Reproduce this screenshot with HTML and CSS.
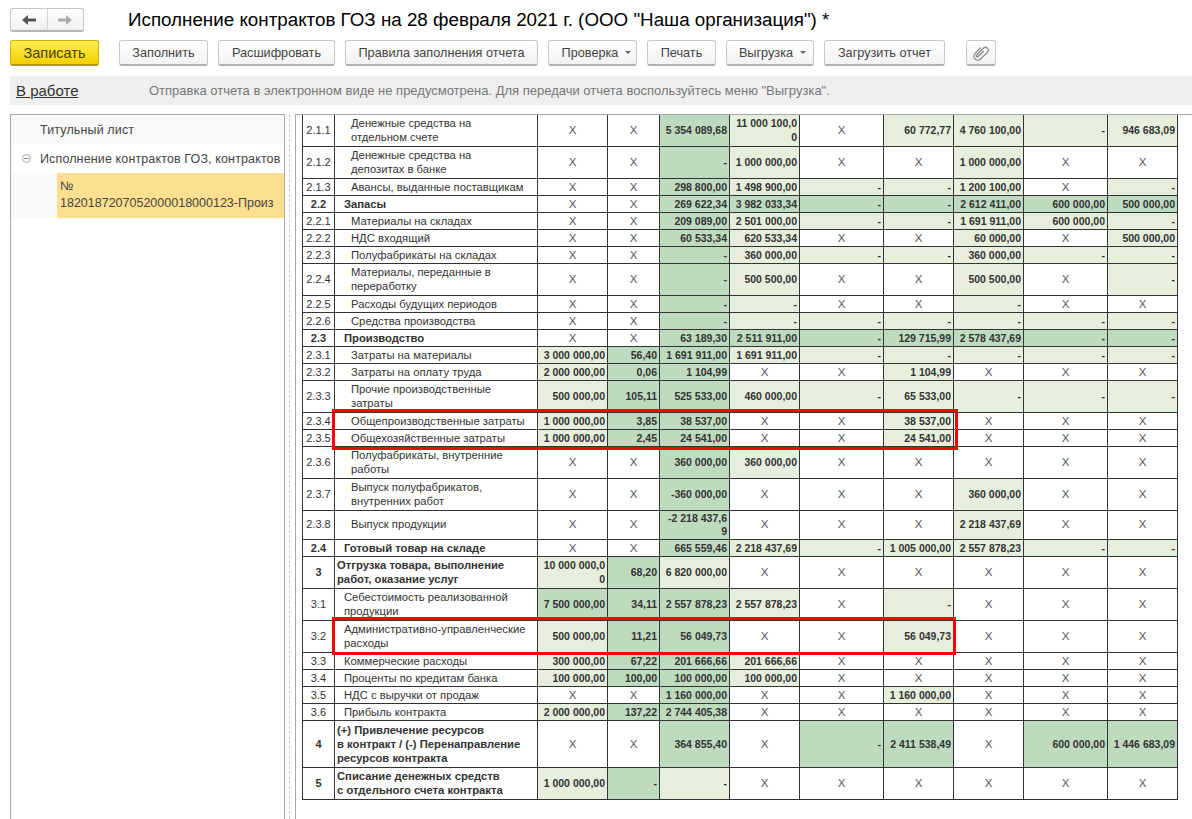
FILE: index.html
```html
<!DOCTYPE html>
<html lang="ru">
<head>
    <meta charset="UTF-8">
    <title>Исполнение контрактов ГОЗ</title>
    <link rel="stylesheet" href="styles.css">
</head>
<body>
    <div class="title-bar">
        <div class="nav-box">
            <button class="nav-btn"><svg width="16" height="12" viewBox="0 0 16 12"><path d="M1 6l6-5v3.500h8v3H7V11z" fill="#555"/></svg></button>
            <button class="nav-btn"><svg width="16" height="12" viewBox="0 0 16 12"><path d="M15 6L9 1v3.500H1v3h8V11z" fill="#aaa"/></svg></button>
        </div>
        <h1 class="doc-title">Исполнение контрактов ГОЗ на 28 февраля 2021 г. (ООО "Наша организация") *</h1>
    </div>

    <div class="toolbar">
        <button class="btn btn-save">Записать</button>
        <button class="btn btn-first w-fill">Заполнить</button>
        <button class="btn w-decode">Расшифровать</button>
        <button class="btn w-rules">Правила заполнения отчета</button>
        <button class="btn w-check">Проверка<span class="caret"></span></button>
        <button class="btn w-print">Печать</button>
        <button class="btn w-export">Выгрузка<span class="caret"></span></button>
        <button class="btn w-load">Загрузить отчет</button>
        <button class="btn btn-clip"><svg width="18" height="18" viewBox="0 0 16 16"><path transform="rotate(45 8 8)" d="M4.500 5v7a3.500 3.500 0 0 0 7 0V3.500a2.500 2.500 0 0 0-5 0V12a1 1 0 0 0 2 0V5" fill="none" stroke="#8c8c8c" stroke-width="1.200"/></svg></button>
    </div>

    <div class="status-bar">
        <a class="status-link">В работе</a>
        <span class="status-note">Отправка отчета в электронном виде не предусмотрена. Для передачи отчета воспользуйтесь меню "Выгрузка".</span>
    </div>

    <div class="workspace">
        <div class="side-panel">
            <div class="tree-row tree-gray">Титульный лист</div>
            <div class="tree-row"><span class="collapse-icon"></span>Исполнение контрактов ГОЗ, контрактов</div>
            <div class="tree-leaf"><div class="tree-selected">№<br>1820187207052000018000123-Произ</div></div>
        </div>
        <div class="splitter"></div>
        <div class="report">
            <div class="table-wrap">
                <table class="grid">
                    <colgroup>
                        <col class="c-code"><col class="c-name"><col class="c-70"><col class="c-52"><col class="c-70"><col class="c-70"><col class="c-84"><col class="c-70"><col class="c-70"><col class="c-84"><col class="c-70">
                    </colgroup>
                    <tr class="first"><td>2.1.1</td><td class="n3">Денежные средства на<br>отдельном счете</td><td class="x">X</td><td class="x">X</td><td class="d">5 354 089,68</td><td class="l">11 000 100,0<br>0</td><td class="x">X</td><td class="l">60 772,77</td><td class="l">4 760 100,00</td><td class="l">-</td><td class="l">946 683,09</td></tr>
                    <tr class="two"><td>2.1.2</td><td class="n3">Денежные средства на<br>депозитах в банке</td><td class="x">X</td><td class="x">X</td><td class="d">-</td><td class="l">1 000 000,00</td><td class="x">X</td><td class="x">X</td><td class="l">1 000 000,00</td><td class="x">X</td><td class="x">X</td></tr>
                    <tr><td>2.1.3</td><td class="n3">Авансы, выданные поставщикам</td><td class="x">X</td><td class="x">X</td><td class="d">298 800,00</td><td class="l">1 498 900,00</td><td class="l">-</td><td class="l">-</td><td class="l">1 200 100,00</td><td class="x">X</td><td class="l">-</td></tr>
                    <tr class="sum"><td>2.2</td><td class="n2">Запасы</td><td class="x">X</td><td class="x">X</td><td class="d">269 622,34</td><td class="d">3 982 033,34</td><td class="d">-</td><td class="d">-</td><td class="d">2 612 411,00</td><td class="d">600 000,00</td><td class="d">500 000,00</td></tr>
                    <tr><td>2.2.1</td><td class="n3">Материалы на складах</td><td class="x">X</td><td class="x">X</td><td class="d">209 089,00</td><td class="l">2 501 000,00</td><td class="l">-</td><td class="l">-</td><td class="l">1 691 911,00</td><td class="l">600 000,00</td><td class="l">-</td></tr>
                    <tr><td>2.2.2</td><td class="n3">НДС входящий</td><td class="x">X</td><td class="x">X</td><td class="d">60 533,34</td><td class="l">620 533,34</td><td class="x">X</td><td class="x">X</td><td class="l">60 000,00</td><td class="x">X</td><td class="l">500 000,00</td></tr>
                    <tr><td>2.2.3</td><td class="n3">Полуфабрикаты на складах</td><td class="x">X</td><td class="x">X</td><td class="d">-</td><td class="l">360 000,00</td><td class="l">-</td><td class="l">-</td><td class="l">360 000,00</td><td class="l">-</td><td class="l">-</td></tr>
                    <tr class="two"><td>2.2.4</td><td class="n3">Материалы, переданные в<br>переработку</td><td class="x">X</td><td class="x">X</td><td class="d">-</td><td class="l">500 500,00</td><td class="x">X</td><td class="x">X</td><td class="l">500 500,00</td><td class="x">X</td><td class="l">-</td></tr>
                    <tr><td>2.2.5</td><td class="n3">Расходы будущих периодов</td><td class="x">X</td><td class="x">X</td><td class="d">-</td><td class="l">-</td><td class="x">X</td><td class="x">X</td><td class="l">-</td><td class="x">X</td><td class="x">X</td></tr>
                    <tr><td>2.2.6</td><td class="n3">Средства производства</td><td class="x">X</td><td class="x">X</td><td class="d">-</td><td class="l">-</td><td class="l">-</td><td class="l">-</td><td class="l">-</td><td class="l">-</td><td class="l">-</td></tr>
                    <tr class="sum"><td>2.3</td><td class="n2">Производство</td><td class="x">X</td><td class="x">X</td><td class="d">63 189,30</td><td class="d">2 511 911,00</td><td class="d">-</td><td class="d">129 715,99</td><td class="d">2 578 437,69</td><td class="d">-</td><td class="d">-</td></tr>
                    <tr><td>2.3.1</td><td class="n3">Затраты на материалы</td><td class="l">3 000 000,00</td><td class="d">56,40</td><td class="d">1 691 911,00</td><td class="l">1 691 911,00</td><td class="l">-</td><td class="l">-</td><td class="l">-</td><td class="l">-</td><td class="l">-</td></tr>
                    <tr><td>2.3.2</td><td class="n3">Затраты на оплату труда</td><td class="l">2 000 000,00</td><td class="d">0,06</td><td class="d">1 104,99</td><td class="x">X</td><td class="x">X</td><td class="l">1 104,99</td><td class="x">X</td><td class="x">X</td><td class="x">X</td></tr>
                    <tr class="two"><td>2.3.3</td><td class="n3">Прочие производственные<br>затраты</td><td class="l">500 000,00</td><td class="d">105,11</td><td class="d">525 533,00</td><td class="l">460 000,00</td><td class="l">-</td><td class="l">65 533,00</td><td class="l">-</td><td class="l">-</td><td class="l">-</td></tr>
                    <tr><td>2.3.4</td><td class="n3">Общепроизводственные затраты</td><td class="l">1 000 000,00</td><td class="d">3,85</td><td class="d">38 537,00</td><td class="x">X</td><td class="x">X</td><td class="l">38 537,00</td><td class="x">X</td><td class="x">X</td><td class="x">X</td></tr>
                    <tr><td>2.3.5</td><td class="n3">Общехозяйственные затраты</td><td class="l">1 000 000,00</td><td class="d">2,45</td><td class="d">24 541,00</td><td class="x">X</td><td class="x">X</td><td class="l">24 541,00</td><td class="x">X</td><td class="x">X</td><td class="x">X</td></tr>
                    <tr class="two"><td>2.3.6</td><td class="n3">Полуфабрикаты, внутренние<br>работы</td><td class="x">X</td><td class="x">X</td><td class="d">360 000,00</td><td class="l">360 000,00</td><td class="x">X</td><td class="x">X</td><td class="x">X</td><td class="x">X</td><td class="x">X</td></tr>
                    <tr class="two"><td>2.3.7</td><td class="n3">Выпуск полуфабрикатов,<br>внутренних работ</td><td class="x">X</td><td class="x">X</td><td class="d">-360 000,00</td><td class="x">X</td><td class="x">X</td><td class="x">X</td><td class="l">360 000,00</td><td class="x">X</td><td class="x">X</td></tr>
                    <tr class="tight"><td>2.3.8</td><td class="n3">Выпуск продукции</td><td class="x">X</td><td class="x">X</td><td class="d">-2 218 437,6<br>9</td><td class="x">X</td><td class="x">X</td><td class="x">X</td><td class="l">2 218 437,69</td><td class="x">X</td><td class="x">X</td></tr>
                    <tr class="sum"><td>2.4</td><td class="n2">Готовый товар на складе</td><td class="x">X</td><td class="x">X</td><td class="d">665 559,46</td><td class="l">2 218 437,69</td><td class="l">-</td><td class="l">1 005 000,00</td><td class="l">2 557 878,23</td><td class="l">-</td><td class="l">-</td></tr>
                    <tr class="sum two"><td>3</td><td class="n1">Отгрузка товара, выполнение<br>работ, оказание услуг</td><td class="l">10 000 000,0<br>0</td><td class="d">68,20</td><td class="l">6 820 000,00</td><td class="x">X</td><td class="x">X</td><td class="x">X</td><td class="x">X</td><td class="x">X</td><td class="x">X</td></tr>
                    <tr class="two"><td>3.1</td><td class="n2">Себестоимость реализованной<br>продукции</td><td class="d">7 500 000,00</td><td class="d">34,11</td><td class="d">2 557 878,23</td><td class="l">2 557 878,23</td><td class="x">X</td><td class="l">-</td><td class="x">X</td><td class="x">X</td><td class="x">X</td></tr>
                    <tr class="two"><td>3.2</td><td class="n2">Административно-управленческие<br>расходы</td><td class="l">500 000,00</td><td class="d">11,21</td><td class="d">56 049,73</td><td class="x">X</td><td class="x">X</td><td class="l">56 049,73</td><td class="x">X</td><td class="x">X</td><td class="x">X</td></tr>
                    <tr><td>3.3</td><td class="n2">Коммерческие расходы</td><td class="l">300 000,00</td><td class="d">67,22</td><td class="d">201 666,66</td><td class="l">201 666,66</td><td class="x">X</td><td class="x">X</td><td class="x">X</td><td class="x">X</td><td class="x">X</td></tr>
                    <tr><td>3.4</td><td class="n2">Проценты по кредитам банка</td><td class="l">100 000,00</td><td class="d">100,00</td><td class="d">100 000,00</td><td class="l">100 000,00</td><td class="x">X</td><td class="x">X</td><td class="x">X</td><td class="x">X</td><td class="x">X</td></tr>
                    <tr><td>3.5</td><td class="n2">НДС с выручки от продаж</td><td class="x">X</td><td class="x">X</td><td class="d">1 160 000,00</td><td class="x">X</td><td class="x">X</td><td class="l">1 160 000,00</td><td class="x">X</td><td class="x">X</td><td class="x">X</td></tr>
                    <tr><td>3.6</td><td class="n2">Прибыль контракта</td><td class="l">2 000 000,00</td><td class="d">137,22</td><td class="d">2 744 405,38</td><td class="x">X</td><td class="x">X</td><td class="x">X</td><td class="x">X</td><td class="x">X</td><td class="x">X</td></tr>
                    <tr class="sum tall"><td>4</td><td class="n1">(+) Привлечение ресурсов<br>в контракт / (-) Перенаправление<br>ресурсов контракта</td><td class="x">X</td><td class="x">X</td><td class="d">364 855,40</td><td class="x">X</td><td class="d">-</td><td class="d">2 411 538,49</td><td class="x">X</td><td class="d">600 000,00</td><td class="d">1 446 683,09</td></tr>
                    <tr class="sum two"><td>5</td><td class="n1">Списание денежных средств<br>с отдельного счета контракта</td><td class="l">1 000 000,00</td><td class="d">-</td><td class="l">-</td><td class="x">X</td><td class="x">X</td><td class="x">X</td><td class="x">X</td><td class="x">X</td><td class="x">X</td></tr>
                </table>
                <div class="red-box box-one"></div>
                <div class="red-box box-two"></div>
            </div>
        </div>
    </div>
</body>
</html>
```

FILE: styles.css
```css
* {
    margin: 0;
    padding: 0;
    box-sizing: border-box;
}

html, body {
    height: 100%;
}

body {
    font-family: "Liberation Sans", Arial, sans-serif;
    background: #ffffff;
    color: #333333;
    overflow: hidden;
}

/* title */
.title-bar {
    display: flex;
    align-items: center;
    height: 40px;
    padding: 6px 0 0 10px;
}

.nav-box {
    display: flex;
    width: 74px;
    height: 24px;
    margin-top: -6px;
    border: 1px solid #c6c6c6;
    border-bottom: 2px solid #b4b4b4;
    border-radius: 3px;
    background: linear-gradient(#ffffff, #f0f0f0);
}

.nav-btn {
    flex: 1;
    display: flex;
    align-items: center;
    justify-content: center;
    border: 0;
    background: none;
}

.nav-btn + .nav-btn {
    border-left: 1px solid #d4d4d4;
}

.doc-title {
    margin-left: 44px;
    margin-top: -6px;
    font-size: 18.800px;
    font-weight: normal;
    color: #000000;
    white-space: nowrap;
}

/* toolbar */
.toolbar {
    display: flex;
    height: 26px;
    padding-left: 10px;
    margin-bottom: 10px;
}

.btn {
    display: flex;
    align-items: center;
    justify-content: center;
    height: 26px;
    margin-left: 10px;
    border: 1px solid #c8c8c8;
    border-bottom: 2px solid #b0b0b0;
    border-radius: 3px;
    background: linear-gradient(#ffffff, #f2f2f2);
    font-family: inherit;
    font-size: 12.700px;
    color: #444444;
    white-space: nowrap;
}

.btn-save {
    width: 89px;
    margin-left: 0;
    border-color: #d0b000;
    border-bottom-color: #b39a00;
    background: linear-gradient(#ffee55, #f4cf00);
    font-size: 14.500px;
    color: #4a3c00;
}

.btn-first { margin-left: 20px; }
.w-fill { width: 89px; }
.w-decode { width: 117px; }
.w-rules { width: 193px; }
.w-check { width: 89px; padding-left: 8px; }
.w-print { width: 69px; }
.w-export { width: 88px; padding-left: 5px; }
.w-load { width: 121px; }

.btn-clip {
    width: 30px;
    margin-left: 21px;
}

.caret {
    margin-left: 7px;
    border-left: 3px solid transparent;
    border-right: 3px solid transparent;
    border-top: 3px solid #666666;
}

/* status */
.status-bar {
    display: flex;
    align-items: center;
    height: 29px;
    margin-left: 10px;
    padding-left: 6px;
    background: #efefef;
}

.status-link {
    width: 133px;
    font-size: 15px;
    color: #333333;
    text-decoration: underline;
}

.status-note {
    font-size: 13px;
    color: #777777;
    white-space: nowrap;
}

/* body */
.workspace {
    display: flex;
    height: 705px;
    margin-top: 9px;
}

.side-panel {
    width: 275px;
    margin-left: 10px;
    border: 1px solid #a8a8a8;
    border-bottom: 0;
    font-size: 12.500px;
    color: #444444;
}

.tree-row {
    position: relative;
    display: flex;
    align-items: center;
    height: 29px;
    padding-left: 29px;
    letter-spacing: 0.130px;
    white-space: nowrap;
}

.tree-gray {
    background: #f9f9f9;
}

.collapse-icon {
    position: absolute;
    left: 11px;
    top: 10px;
    width: 9px;
    height: 9px;
    border: 1px solid #aaaaaa;
    border-radius: 50%;
    background: linear-gradient(#888888, #888888) center / 5px 1px no-repeat;
}

.tree-leaf {
    padding-left: 46px;
    background: #f9f9f9;
}

.tree-selected {
    height: 45px;
    padding: 5px 0 0 3px;
    line-height: 17px;
    background: #fde08f;
    overflow: hidden;
    white-space: nowrap;
}

.splitter {
    width: 1px;
    margin-left: 4px;
    border-left: 1px dashed #cccccc;
}

.report {
    flex: 1;
    margin-left: 5px;
    padding-left: 6px;
    border-left: 1px solid #a8a8a8;
    border-top: 1px solid #a8a8a8;
}

.table-wrap {
    position: relative;
    width: 876px;
}

.grid {
    width: 876px;
    table-layout: fixed;
    border-collapse: collapse;
    font-size: 11.250px;
    line-height: 14px;
}

.grid tr { height: 17px; }
.grid tr.first { height: 31px; }
.grid tr.two { height: 32px; }
.grid tr.tight { height: 29px; }
.grid tr.tall { height: 47px; }

.grid td {
    padding: 0 2px;
    border: 1px solid #333333;
    text-align: center;
    vertical-align: middle;
    font-weight: bold;
}

.grid td:first-child {
    font-weight: normal;
    font-size: 11px;
}

.grid td:nth-child(2) {
    font-weight: normal;
    text-align: left;
    white-space: nowrap;
}

.grid .first td {
    border-top: 0;
}

.c-code { width: 32px; }
.c-name { width: 203px; }
.c-52 { width: 52px; }
.c-70 { width: 70px; }
.c-84 { width: 84px; }

.grid .n1 { padding-left: 2px; }
.grid .n2 { padding-left: 9px; }
.grid .n3 { padding-left: 16px; }

.grid .x {
    font-weight: normal;
    color: #555555;
    font-size: 11.500px;
}

.grid .l,
.grid .d {
    text-align: right;
    font-size: 10.500px;
    white-space: nowrap;
}

.grid .l { background: #e6efdc; }
.grid .d { background: #bfdbbf; }

.sum td:first-child,
.sum td:nth-child(2) {
    font-weight: bold !important;
}

.tight td { line-height: 13px; }

.red-box {
    position: absolute;
    left: 30px;
    border: 3px solid #ff0000;
}

.box-one {
    top: 294px;
    width: 626px;
    height: 41px;
}

.box-two {
    top: 502px;
    width: 624px;
    height: 38px;
}
```
